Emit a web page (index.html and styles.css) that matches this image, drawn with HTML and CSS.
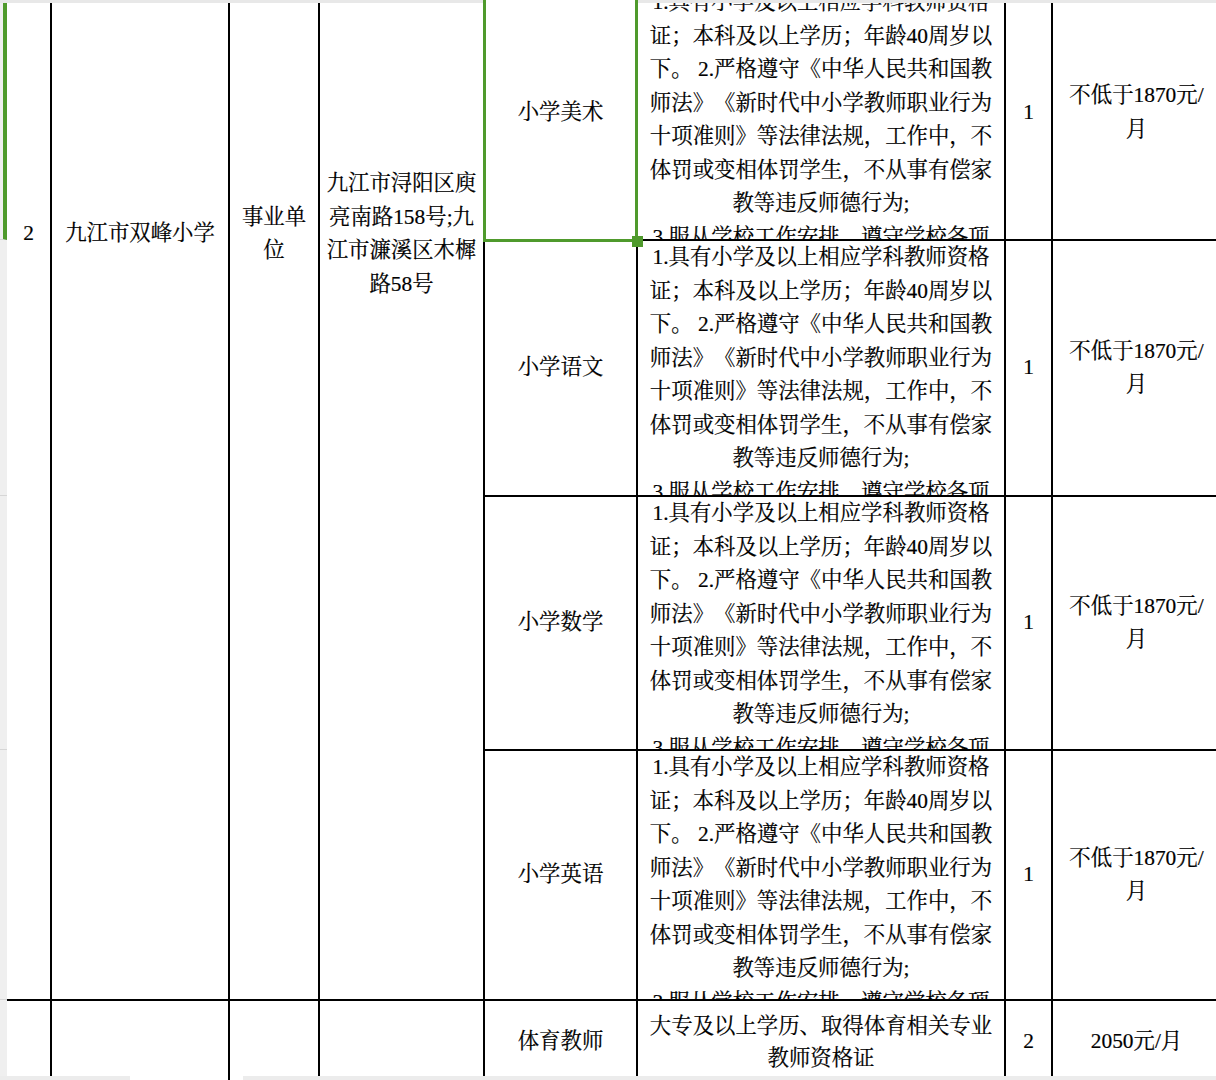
FILE: index.html
```html
<!DOCTYPE html>
<html lang="zh-CN">
<head>
<meta charset="utf-8">
<title>招聘岗位表</title>
<link rel="stylesheet" href="styles.css">
</head>
<body>
<div class="viewport">
  <div class="rowheads">
    <div class="rh rh-sel" style="height:240px"></div>
    <div class="rh" style="height:256px"></div>
    <div class="rh" style="height:254px"></div>
    <div class="rh" style="height:250px"></div>
    <div class="rh" style="height:82px"></div>
  </div>
  <div class="sheet">
    <div class="cell merged c1"><div class="mi">2</div></div>
    <div class="cell merged c2"><div class="mi">九江市双峰小学</div></div>
    <div class="cell merged c3"><div class="mi">事业单<br>位</div></div>
    <div class="cell merged c4"><div class="mi">九江市浔阳区庾<br>亮南路158号;九<br>江市濂溪区木樨<br>路58号</div></div>

    <div class="cell mid c5 r1 selected">小学美术</div>
    <div class="cell req c6 r1">1.具有小学及以上相应学科教师资格<br>证；本科及以上学历；年龄40周岁以<br>下。 2.严格遵守《中华人民共和国教<br>师法》《新时代中小学教师职业行为<br>十项准则》等法律法规，工作中，不<br>体罚或变相体罚学生，不从事有偿家<br>教等违反师德行为;<br>3.服从学校工作安排，遵守学校各项<br>规章制度。</div>
    <div class="cell mid c7 r1">1</div>
    <div class="cell mid c8 r1">不低于1870元/<br>月</div>

    <div class="cell mid c5 r2">小学语文</div>
    <div class="cell req c6 r2">1.具有小学及以上相应学科教师资格<br>证；本科及以上学历；年龄40周岁以<br>下。 2.严格遵守《中华人民共和国教<br>师法》《新时代中小学教师职业行为<br>十项准则》等法律法规，工作中，不<br>体罚或变相体罚学生，不从事有偿家<br>教等违反师德行为;<br>3.服从学校工作安排，遵守学校各项<br>规章制度。</div>
    <div class="cell mid c7 r2">1</div>
    <div class="cell mid c8 r2">不低于1870元/<br>月</div>

    <div class="cell mid c5 r3">小学数学</div>
    <div class="cell req c6 r3">1.具有小学及以上相应学科教师资格<br>证；本科及以上学历；年龄40周岁以<br>下。 2.严格遵守《中华人民共和国教<br>师法》《新时代中小学教师职业行为<br>十项准则》等法律法规，工作中，不<br>体罚或变相体罚学生，不从事有偿家<br>教等违反师德行为;<br>3.服从学校工作安排，遵守学校各项<br>规章制度。</div>
    <div class="cell mid c7 r3">1</div>
    <div class="cell mid c8 r3">不低于1870元/<br>月</div>

    <div class="cell mid c5 r4">小学英语</div>
    <div class="cell req c6 r4">1.具有小学及以上相应学科教师资格<br>证；本科及以上学历；年龄40周岁以<br>下。 2.严格遵守《中华人民共和国教<br>师法》《新时代中小学教师职业行为<br>十项准则》等法律法规，工作中，不<br>体罚或变相体罚学生，不从事有偿家<br>教等违反师德行为;<br>3.服从学校工作安排，遵守学校各项<br>规章制度。</div>
    <div class="cell mid c7 r4">1</div>
    <div class="cell mid c8 r4">不低于1870元/<br>月</div>

    <div class="cell c1 r5"></div>
    <div class="cell c2 r5"></div>
    <div class="cell c3 r5"></div>
    <div class="cell c4 r5"></div>
    <div class="cell mid c5 r5">体育教师</div>
    <div class="cell mid c6 r5 tight">大专及以上学历、取得体育相关专业<br>教师资格证</div>
    <div class="cell mid c7 r5">2</div>
    <div class="cell mid c8 r5">2050元/月</div>
  </div>
  <div class="topbar"></div>
  <div class="bottombar">
    <div class="bb-seg bb-left"></div>
    <div class="bb-gap"></div>
    <div class="bb-seg bb-right"></div>
  </div>
</div>
</body>
</html>
```
FILE: styles.css
```css
html, body {
  margin: 0;
  padding: 0;
  background: #ffffff;
}

.viewport {
  position: relative;
  width: 1216px;
  height: 1080px;
  overflow: hidden;
  display: flex;
  align-items: flex-start;
  font-family: "Liberation Serif", "Noto Serif CJK SC", "Noto Sans CJK SC", serif;
  font-size: 21.4px;
  color: #000000;
  text-spacing-trim: space-all;
  -webkit-text-stroke: 0.2px #000000;
}

.rowheads {
  flex: 0 0 7px;
  width: 7px;
  height: 1080px;
  background: #efefef;
  display: flex;
  flex-direction: column;
}

.rh {
  box-sizing: border-box;
  border-bottom: 1px solid #d6d6d6;
  flex: 0 0 auto;
}

.rh-sel {
  border-right: 4px solid #4f9a2c;
}

.sheet {
  flex: 0 0 auto;
  margin-top: -14px;
  display: grid;
  grid-template-columns: 43px 176px 88px 163px 151px 366px 45px 167px;
  grid-template-rows: 253px 254px 252px 248px 82px;
  gap: 2px;
  background: #000000;
}

.cell {
  background: #ffffff;
  overflow: hidden;
  position: relative;
  line-height: 33.5px;
  text-align: center;
  white-space: nowrap;
  text-spacing-trim: space-all;
}

.c1 { grid-column: 1; }
.c2 { grid-column: 2; }
.c3 { grid-column: 3; }
.c4 { grid-column: 4; }
.c5 { grid-column: 5; }
.c6 { grid-column: 6; }
.c7 { grid-column: 7; }
.c8 { grid-column: 8; }

.r1 { grid-row: 1; }
.r2 { grid-row: 2; }
.r3 { grid-row: 3; }
.r4 { grid-row: 4; }
.r5 { grid-row: 5; }

.merged {
  grid-row: 1 / 5;
}

.mi {
  height: 496px;
  display: flex;
  align-items: center;
  justify-content: center;
}

.mid {
  display: flex;
  align-items: center;
  justify-content: center;
}

.req {
  padding-top: 0;
}

.tight {
  line-height: 32px;
}

.selected {
  overflow: visible;
  z-index: 5;
}

.selected::before {
  content: "";
  position: absolute;
  left: -2px;
  right: -2px;
  top: -4px;
  bottom: -3px;
  border: 3.5px solid #4f9a2c;
  pointer-events: none;
}

.selected::after {
  content: "";
  position: absolute;
  right: -7px;
  bottom: -8px;
  width: 11px;
  height: 11px;
  background: #4f9a2c;
}

.topbar {
  position: absolute;
  left: 0;
  top: 0;
  width: 1216px;
  height: 3px;
  background: #e8e8e8;
}

.bottombar {
  position: absolute;
  left: 0;
  bottom: 0;
  width: 1216px;
  height: 4px;
  display: flex;
}

.bb-seg {
  background: #ececec;
  height: 4px;
}

.bb-left { flex: 0 0 130px; }
.bb-gap { flex: 0 0 113px; }
.bb-right { flex: 1 1 auto; }
```
